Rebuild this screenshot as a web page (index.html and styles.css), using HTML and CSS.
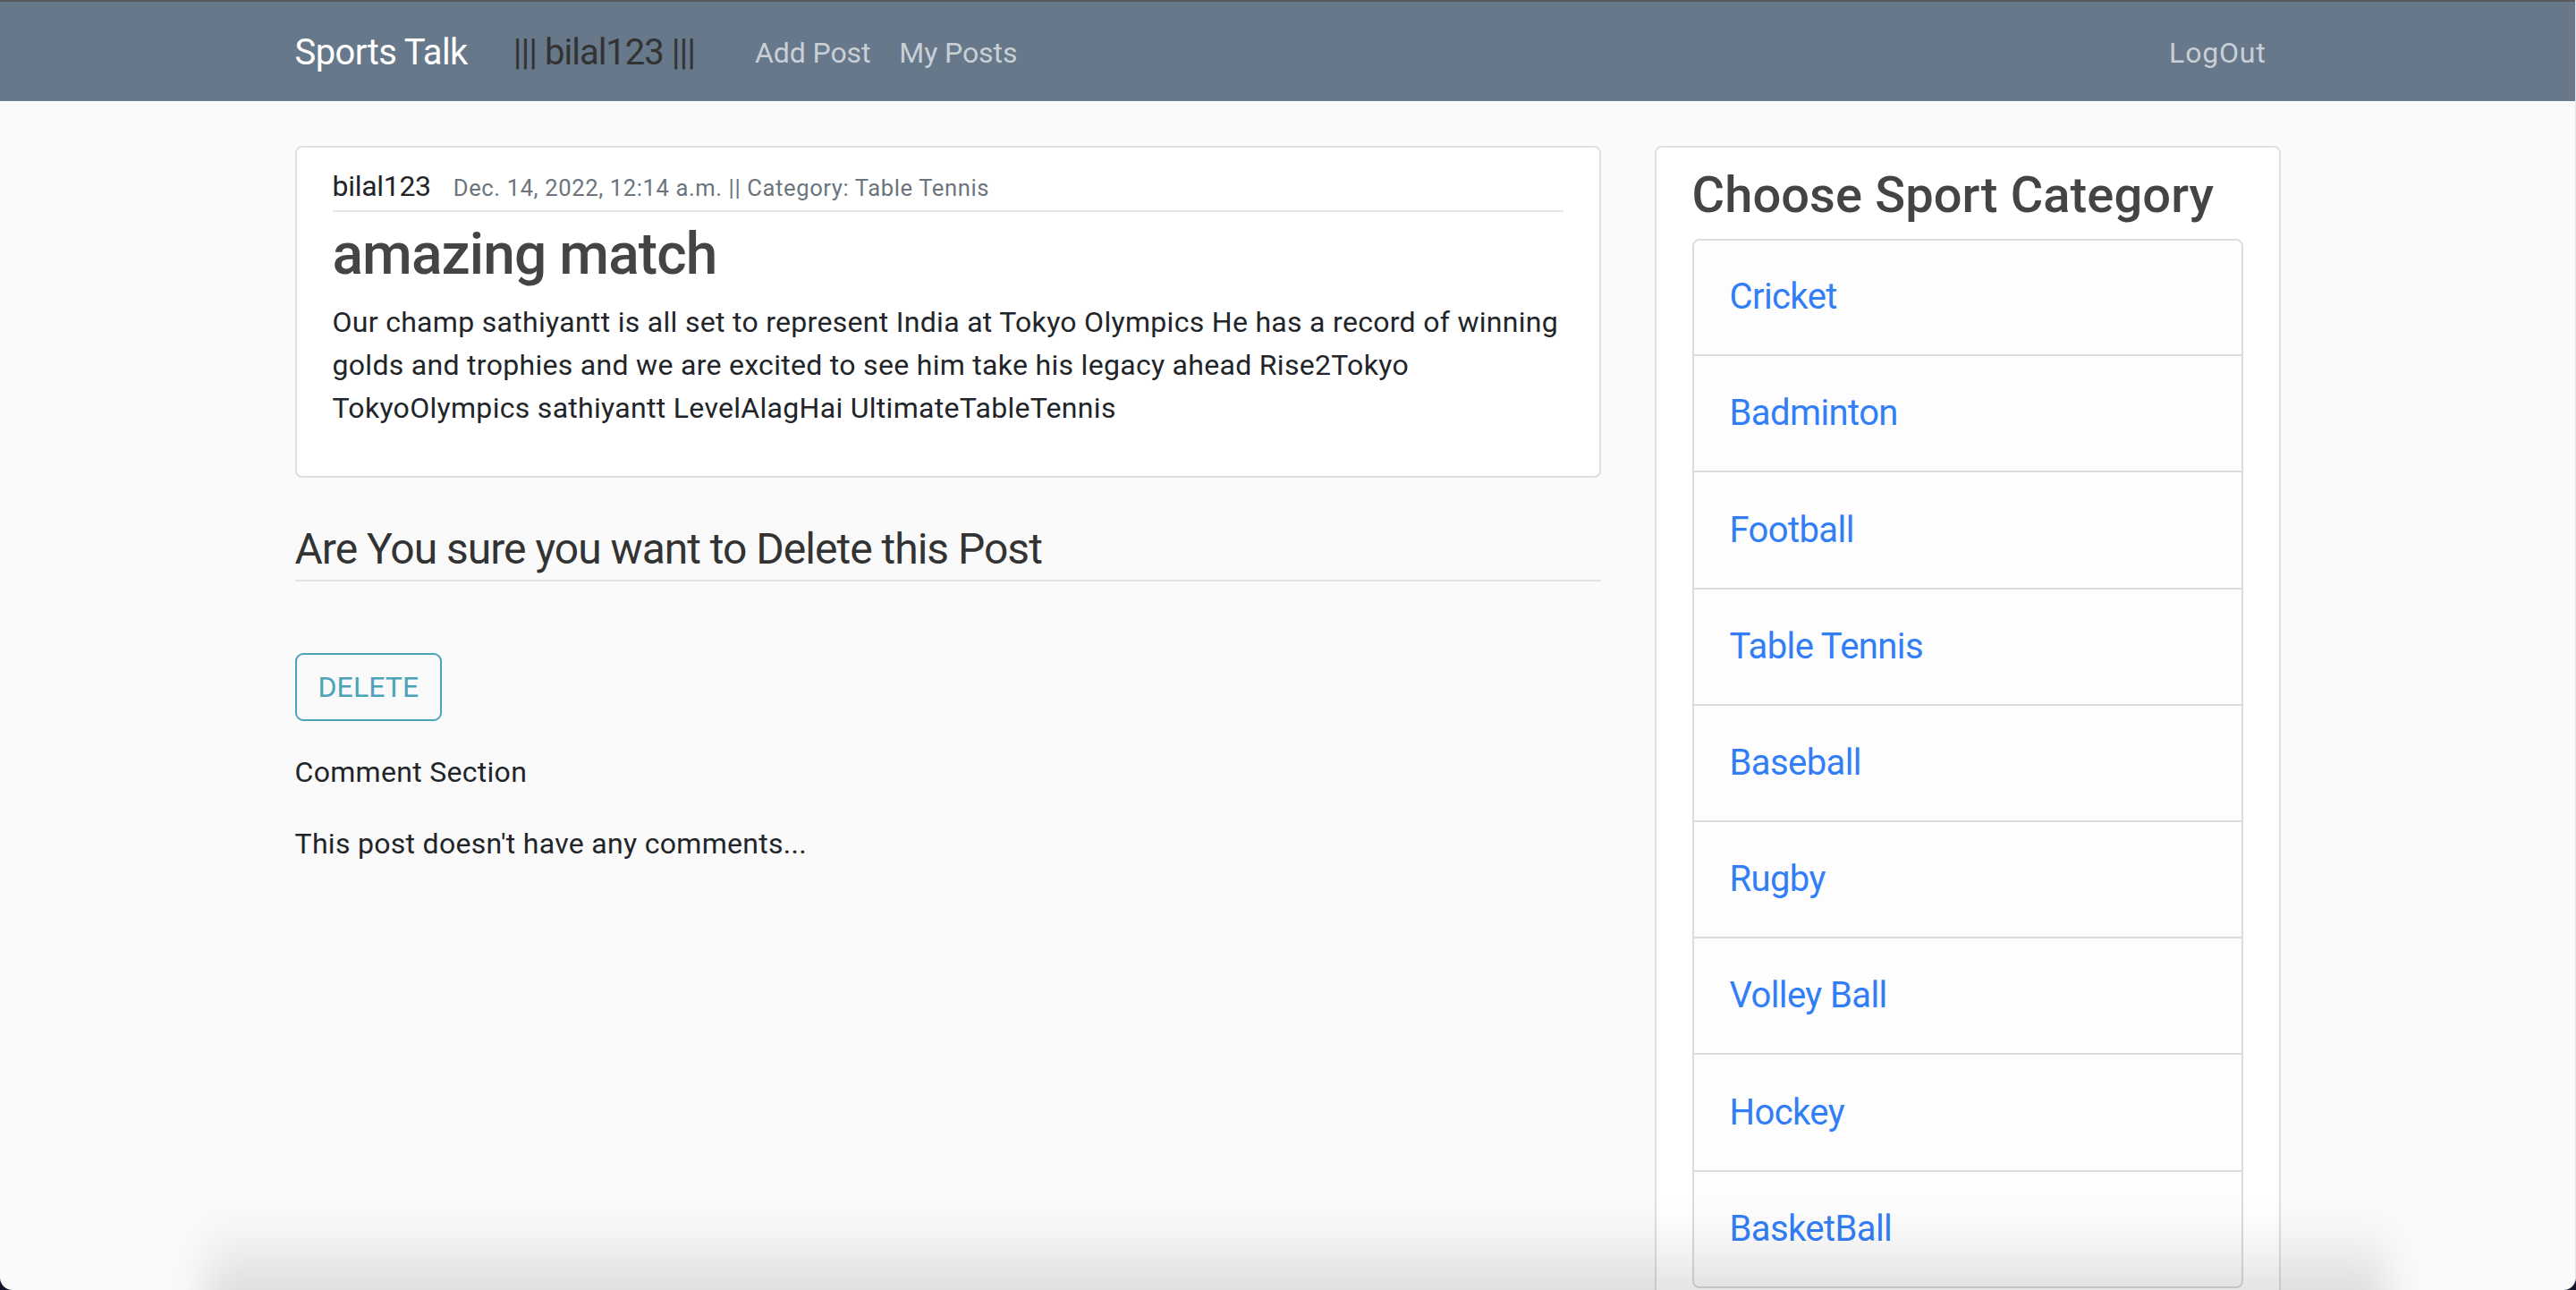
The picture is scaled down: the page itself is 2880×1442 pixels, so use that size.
FILE: index.html
```html
<!DOCTYPE html>
<html lang="en">
<head>
<meta charset="utf-8">
<title>Sports Talk</title>
<link rel="stylesheet" href="styles.css">
</head>
<body>
<div class="window">
  <nav class="navbar">
    <div class="nav-inner">
      <a class="brand" href="#">Sports Talk</a>
      <span class="user">||| bilal123 |||</span>
      <a class="nav-link" href="#">Add Post</a>
      <a class="nav-link" href="#">My Posts</a>
      <a class="nav-link logout" href="#">LogOut</a>
    </div>
  </nav>

  <main class="container">
    <section class="main-col">
      <article class="card post">
        <div class="post-meta">
          <span class="author">bilal123</span><span class="meta">Dec. 14, 2022, 12:14 a.m. || Category: Table Tennis</span>
        </div>
        <hr class="meta-rule">
        <h2 class="post-title">amazing match</h2>
        <p class="post-text">Our champ sathiyantt is all set to represent India at Tokyo Olympics He has a record of winning golds and trophies and we are excited to see him take his legacy ahead Rise2Tokyo TokyoOlympics sathiyantt LevelAlagHai UltimateTableTennis</p>
      </article>

      <h4 class="confirm-title">Are You sure you want to Delete this Post</h4>
      <button class="btn-delete" type="button">DELETE</button>
      <p class="comments-label">Comment Section</p>
      <p class="comments-empty">This post doesn't have any comments...</p>
    </section>

    <aside class="side-col">
      <div class="card side">
        <h3 class="side-title">Choose Sport Category</h3>
        <ul class="list-group">
          <li class="list-item"><a href="#">Cricket</a></li>
          <li class="list-item"><a href="#">Badminton</a></li>
          <li class="list-item"><a href="#">Football</a></li>
          <li class="list-item"><a href="#">Table Tennis</a></li>
          <li class="list-item"><a href="#">Baseball</a></li>
          <li class="list-item"><a href="#">Rugby</a></li>
          <li class="list-item"><a href="#">Volley Ball</a></li>
          <li class="list-item"><a href="#">Hockey</a></li>
          <li class="list-item"><a href="#">BasketBall</a></li>
        </ul>
      </div>
    </aside>
  </main>
  <div class="dock-shadow"></div>
</div>
</body>
</html>
```
FILE: styles.css
```css
* { box-sizing: border-box; }
html, body { margin: 0; padding: 0; height: 100%; }
html { background: #15152a; }
body {
  font-family: Roboto, "Liberation Sans", sans-serif;
  font-size: 32px;
  line-height: 1.5;
  color: #212529;
  letter-spacing: 0.3px;
  overflow: hidden;
}
.window {
  position: relative;
  height: 100vh;
  overflow: hidden;
  background: #fafafa;
  border-radius: 0 0 14px 14px;
  border-right: 1px solid #e6e6e6;
}
a { text-decoration: none; }

/* navbar */
.navbar {
  background: #667889;
  border-top: 2px solid #59595e;
  height: 113px;
  display: flex;
  align-items: center;
  padding-top: 3px;
}
.nav-inner {
  width: 2220px;
  margin: 0 auto;
  display: flex;
  align-items: center;
}
.brand {
  color: #fff;
  font-size: 40px;
  line-height: 60px;
  letter-spacing: -0.6px;
  margin-right: 51px;
}
.user {
  color: #333;
  font-size: 40px;
  line-height: 60px;
  letter-spacing: -1px;
  margin-right: 51px;
}
.nav-link {
  color: #c9cfd6;
  font-size: 32px;
  line-height: 48px;
  padding: 0 16px;
  letter-spacing: -0.1px;
}
.logout { margin-left: auto; padding-right: 16px; letter-spacing: 0.8px; }

/* layout */
.container {
  width: 2220px;
  margin: 50px auto 0;
  display: grid;
  grid-template-columns: 1460px 700px;
  column-gap: 60px;
  align-items: start;
}

.card {
  background: #fff;
  border: 2px solid #dfdfdf;
  border-radius: 8px;
}

/* post */
.post { padding: 23px 40px 52px; }
.post-meta { line-height: 40px; }
.author { font-size: 32px; color: #212529; letter-spacing: -0.3px; }
.meta { font-size: 25.6px; color: #6c757d; letter-spacing: 0.6px; margin-left: 25px; }
.meta-rule {
  border: 0;
  border-top: 2px solid #e5e5e5;
  margin: 5px 0 0;
}
.post-title {
  margin: 10px 0 0;
  font-size: 64px;
  line-height: 1.2;
  font-weight: 500;
  color: #444;
  letter-spacing: -0.9px;
}
.post-text { margin: 12px 0 0; color: #212529; }

.confirm-title {
  margin: 51px 0 0;
  font-size: 48px;
  font-weight: 400;
  line-height: 1.2;
  color: #333;
  letter-spacing: -1px;
  padding-bottom: 6px;
  border-bottom: 2px solid #dee2e6;
}
.btn-delete {
  display: block;
  margin-top: 80px;
  font-family: inherit;
  font-size: 32px;
  line-height: 48px;
  letter-spacing: 0.1px;
  padding: 12px 24px;
  color: #4aa3b8;
  background: transparent;
  border: 2px solid #4aa3b8;
  border-radius: 9px;
}
.comments-label { margin: 33px 0 0; }
.comments-empty { margin: 32px 0 0; }

/* sidebar */
.side { padding: 20px 40px 40px; }
.side-title {
  margin: 0;
  font-size: 56px;
  line-height: 1.2;
  font-weight: 500;
  color: #444;
  letter-spacing: 0.1px;
}
.list-group {
  list-style: none;
  margin: 15px 0 0;
  padding: 0;
  border: 2px solid #dcdcdc;
  border-radius: 8px;
  background: #fdfdfd;
}
.list-item {
  font-size: 40px;
  line-height: 60px;
  padding: 34.1px 40px;
  border-top: 2px solid #dcdcdc;
}
.list-item:first-child { border-top: 0; padding-top: 33px; }
.list-item a {
  color: #327ef6;
  letter-spacing: -0.6px;
}

/* bottom shadow overlay (screenshot edge) */
.dock-shadow {
  position: absolute;
  left: 230px;
  right: 210px;
  bottom: -40px;
  height: 120px;
  background: linear-gradient(to bottom, rgba(0,0,0,0), rgba(0,0,0,0.16));
  filter: blur(22px);
  pointer-events: none;
}
```
